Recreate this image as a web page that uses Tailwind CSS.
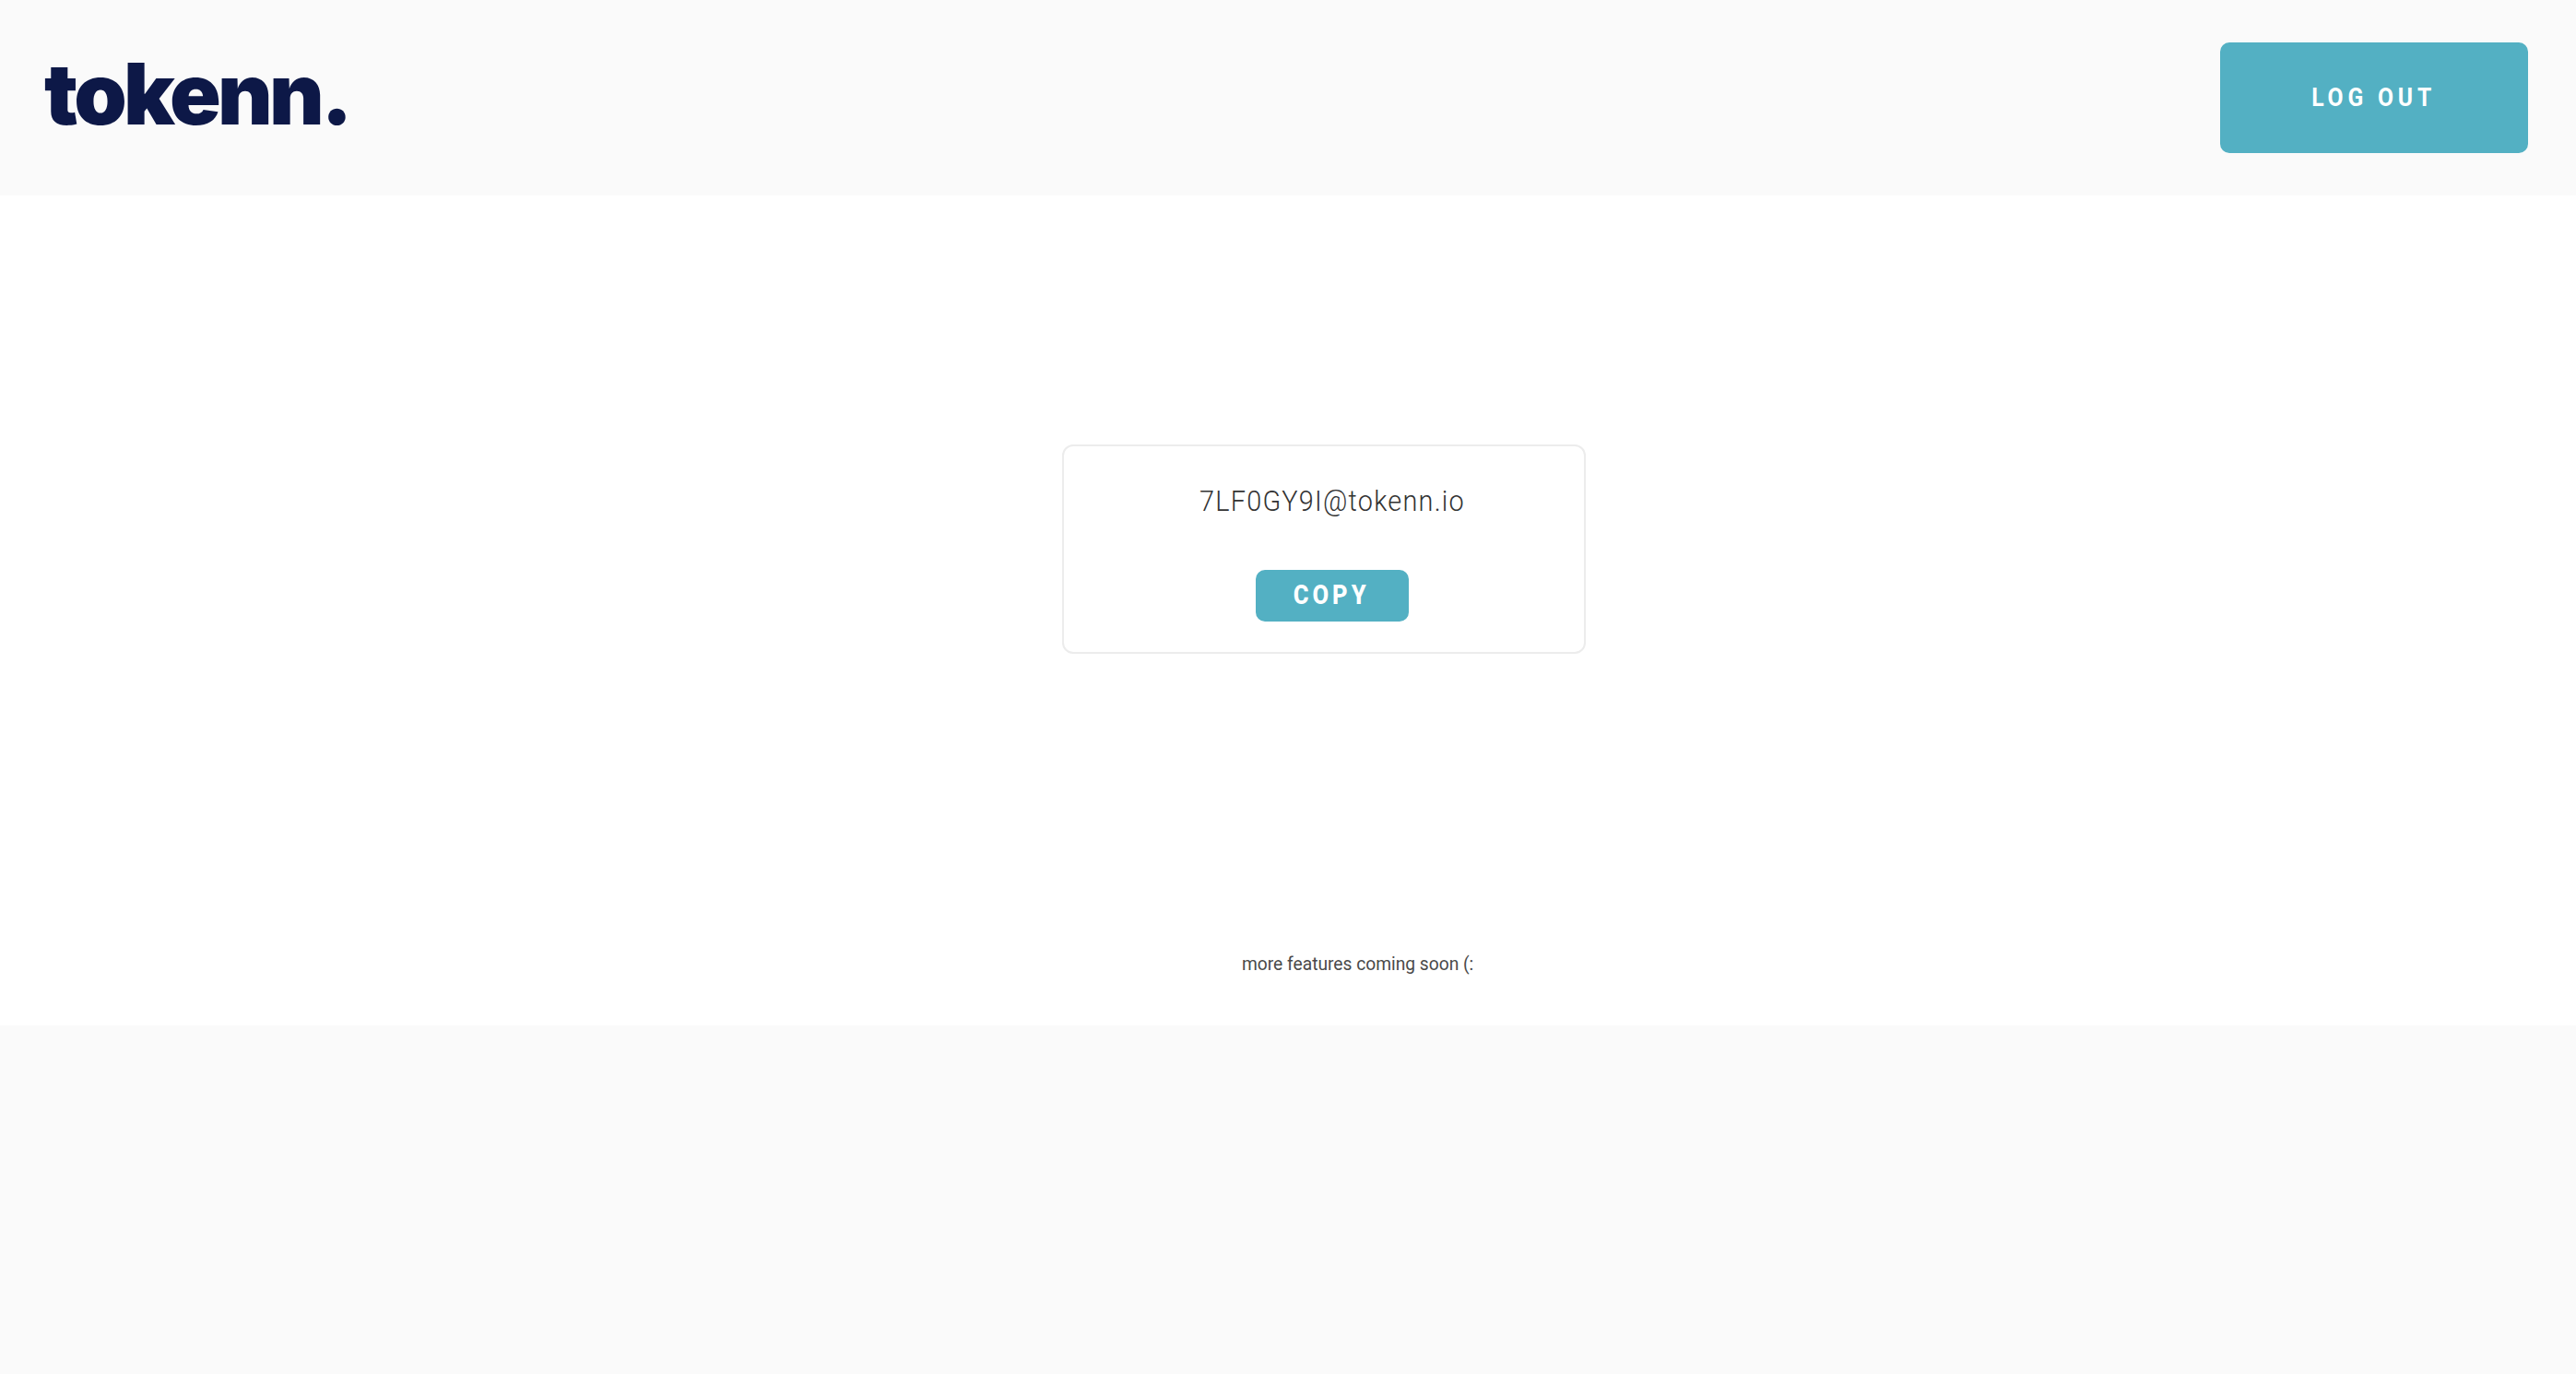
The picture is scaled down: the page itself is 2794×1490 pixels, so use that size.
<!DOCTYPE html>
<html lang="en">
<head>
<meta charset="utf-8">
<title>tokenn.</title>
<script src="https://cdn.jsdelivr.net/npm/@tailwindcss/browser@4"></script>
</head>
<body class="bg-[#fafafa] font-['Roboto',sans-serif] min-h-[1490px]">
  <header class="h-[212px] bg-[#fafafa] flex items-start justify-between pl-[48px] pr-[52px]">
    <a class="block mt-[42px] text-[92px] leading-[120px] font-black tracking-[-3.7px] text-[#0d1847] font-['Inter',sans-serif]">tokenn.</a>
    <button class="mt-[46px] w-[334px] h-[120px] rounded-[10px] bg-[#53b0c3] text-white font-bold text-[28px] tracking-[5.5px] pr-[1px]"><span class="inline-block scale-x-[0.88]">LOG OUT</span></button>
  </header>
  <main class="h-[900px] bg-white flex flex-col items-start">
    <section class="ml-[1152px] mt-[270px] w-[568px] h-[227px] border-2 border-[#ececec] rounded-[12px] pl-[18px] flex flex-col items-center">
      <p class="mt-[37px] text-[32px] leading-[44px] font-light tracking-[1.4px] scale-x-[0.9] text-[#333333] whitespace-nowrap">7LF0GY9I@tokenn.io</p>
      <button class="mt-[53px] w-[166px] h-[56px] rounded-[10px] bg-[#53b0c3] text-white font-extrabold text-[29px] tracking-[4.6px] pr-[2px]"><span class="inline-block scale-x-[0.88]">COPY</span></button>
    </section>
    <p class="ml-[1347px] mt-[322px] text-[20px] leading-[28px] scale-x-[0.96] origin-left text-[#4a4a4a] whitespace-nowrap">more features coming soon (:</p>
  </main>
</body>
</html>
